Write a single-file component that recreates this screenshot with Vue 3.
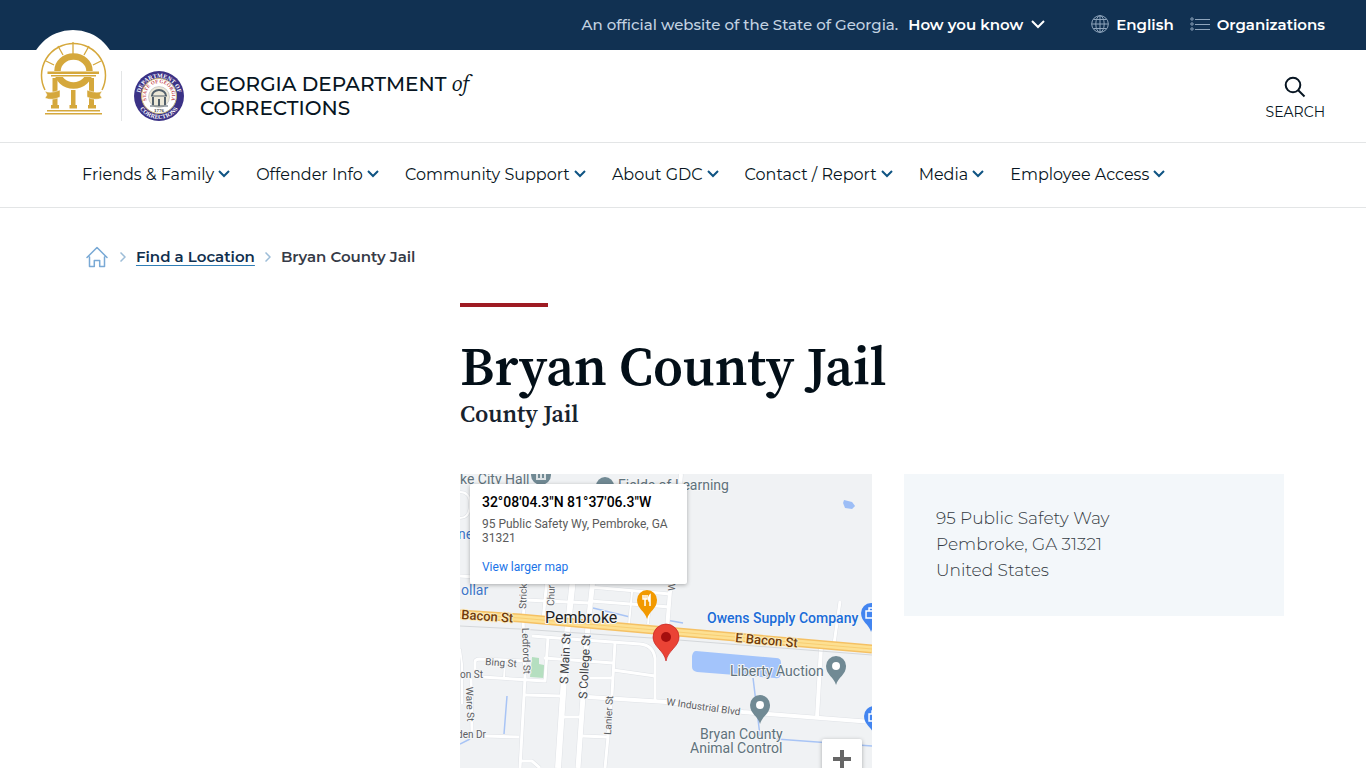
<template>
  <div class="page">
    <div class="top-bar">
      <div class="official">
        <span>An official website of the State of Georgia.</span>
        <button type="button" class="know-button">
          How you know
          <svg width="14" height="9" viewBox="0 0 14 9" aria-hidden="true">
            <path d="M1 1l6 6 6-6" fill="none" stroke="currentColor" stroke-width="2" />
          </svg>
        </button>
      </div>
      <div class="top-links">
        <a href="#language">
          <svg width="18" height="18" viewBox="0 0 18 18" fill="none" stroke="#8fa5bc" aria-hidden="true">
            <circle cx="9" cy="9" r="8.3" />
            <ellipse cx="9" cy="9" rx="4.2" ry="8.3" />
            <path d="M9 .7v16.6M.7 9h16.6M2.4 4.5h13.2M2.4 13.5h13.2" />
          </svg>
          English
        </a>
        <a href="#organizations">
          <svg width="20" height="14" viewBox="0 0 20 14" fill="none" stroke="#8fa5bc" aria-hidden="true">
            <circle cx="2" cy="2" r="1.2" />
            <circle cx="2" cy="7" r="1.2" />
            <circle cx="2" cy="12" r="1.2" />
            <path d="M5 2.5h15M5 7.5h15M5 12.5h15" />
          </svg>
          Organizations
        </a>
      </div>
    </div>

    <header class="site-header">
      <a href="#georgia" class="state-logo" aria-label="Georgia.gov">
        <svg width="88" height="88" viewBox="0 0 88 88">
          <circle cx="44" cy="44" r="44" fill="#fff" />
          <g fill="none" stroke="#d5a83c">
            <path d="M16 60A32 32 0 1 1 73 60" stroke-width="1.5" />
            <path d="M17 31l8 4M29 16l5 9M44 12v12M60 16l-5 9M72 31l-8 4" stroke-width="1.3" />
            <ellipse cx="44.5" cy="41" rx="16" ry="14.5" stroke-width="6.5" />
          </g>
          <path d="M18 41h53v6H18z" fill="#fff" />
          <g fill="#d5a83c">
            <path d="M18.500 41.500h51.500v2.500h-51.500zM22 45h45v1.500H22z" />
            <path d="M23.500 48h5v27h-5zM60 48h5v27h-5zM42 60h4.500v15H42z" />
            <path d="M22 75h8v3.500h-8zM59 75h8v3.500h-8zM40.500 75h7.500v3.500h-7.500z" />
            <path d="M18 80h53v1.500H18zM16 83h57v1.500H16z" />
            <path d="M16 61q5 3 15-1v7q-8 4-15 1l2-3zM73 61q-5 3-15-1v7q8 4 15 1l-2-3z" stroke="#fff" stroke-width=".5" />
          </g>
        </svg>
      </a>
      <a href="#home" class="brand">
        <svg class="seal" width="50" height="50" viewBox="0 0 50 50" aria-hidden="true">
          <defs>
            <path id="seal-top" d="M6.500 30A19 19 0 1 1 43.500 30" />
            <path id="seal-bottom" d="M2 25A23 23 0 0 0 48 25" />
            <path id="seal-inner" d="M13 30A13 13 0 1 1 37 30" />
          </defs>
          <circle cx="25" cy="25" r="25" fill="#3b3286" />
          <circle cx="25" cy="25" r="17.5" fill="#fff" stroke="#c8b679" />
          <circle cx="25" cy="26" r="10.5" fill="#ece8d8" stroke="#a6a9ad" stroke-width=".5" />
          <g font-family="Liberation Serif, serif" font-weight="bold">
            <text font-size="6" fill="#fff"><textPath href="#seal-top" startOffset="50%" text-anchor="middle">DEPARTMENT OF</textPath></text>
            <text font-size="6" fill="#fff"><textPath href="#seal-bottom" startOffset="50%" text-anchor="middle">CORRECTIONS</textPath></text>
            <text font-size="5" fill="#c44a50"><textPath href="#seal-inner" startOffset="50%" text-anchor="middle">STATE OF GEORGIA</textPath></text>
            <text x="25" y="41" font-size="5" fill="#444" text-anchor="middle">1776</text>
          </g>
          <g fill="none" stroke="#52606c">
            <path d="M18 25a7 6 0 0 1 14 0" stroke-width="2" />
            <path d="M17 25h16M16 35h18" />
            <path d="M19 26v8M31 26v8M25 28v7" stroke-width="2" />
          </g>
        </svg>
        <span class="brand-name">GEORGIA DEPARTMENT <em>of</em><br />CORRECTIONS</span>
      </a>
      <button type="button" class="search-button">
        <svg width="22" height="22" viewBox="0 0 22 22" aria-hidden="true">
          <circle cx="9" cy="9" r="7.3" fill="none" stroke="currentColor" stroke-width="2" />
          <path d="M14 14l6.500 6.500" stroke="currentColor" stroke-width="2" />
        </svg>
        SEARCH
      </button>
    </header>

    <nav class="main-nav" aria-label="Main">
      <button v-for="item in navItems" :key="item" type="button">
        {{ item }}
        <svg width="12" height="8" viewBox="0 0 12 8" aria-hidden="true">
          <path d="M1 1l5 5 5-5" fill="none" stroke="#0f5483" stroke-width="2" />
        </svg>
      </button>
    </nav>

    <nav class="breadcrumb" aria-label="Breadcrumb">
      <a href="#home" aria-label="Home">
        <svg width="22" height="22" viewBox="0 0 22 22" fill="none" stroke="#79a9d5" stroke-width="1.5">
          <path d="M1 11.500L11 1.500l10 10M3.500 11v9.500h4.800v-6h5.400v6h4.800V11" stroke-linejoin="round" stroke-linecap="round" />
        </svg>
      </a>
      <svg class="sep" width="6" height="10" viewBox="0 0 6 10" aria-hidden="true"><path d="M.5.5L5 5 .5 9.500" /></svg>
      <a href="#locations" class="crumb-link">Find a Location</a>
      <svg class="sep" width="6" height="10" viewBox="0 0 6 10" aria-hidden="true"><path d="M.5.5L5 5 .5 9.500" /></svg>
      <span>Bryan County Jail</span>
    </nav>

    <main class="content">
      <h1>Bryan County Jail</h1>
      <p class="subtitle">County Jail</p>

      <div class="columns">
        <div class="map">
          <svg class="map-canvas" viewBox="0 0 412 294" preserveAspectRatio="xMidYMin slice">
            <rect width="412" height="294" fill="#f0f2f4" />
            <path d="M72 183l7 1v6l5 1v13l-14-1z" fill="#b5dfc0" />
            <path d="M236 177l80 7q5 0 5 5v11q-1 5-6 4l-78-6q-5-1-5-5v-11q1-5 4-5z" fill="#a3c4fb" />
            <path d="M384 26l8 2 3 4-3 3-7-1-2-5z" fill="#9dbef6" />
            <g fill="none" stroke="#a8c4f5" stroke-width="1.5">
              <path d="M47 222l-3 38M0 270l10-5M133 134l37 9M206 146l17 3M293 204l7 58M316 265l96 7" />
            </g>

            <g fill="none" stroke-linejoin="round">
              <g stroke="#dfe2e6">
                <path v-for="road in roads" :key="road.d" :d="road.d" :stroke-width="road.w + 1" />
              </g>
              <g stroke="#fff">
                <path v-for="road in roads" :key="road.d" :d="road.d" :stroke-width="road.w" />
              </g>
            </g>
            <path d="M0 152l60 3 146 10 206 16" fill="none" stroke="#d4d7da" />
            <g fill="none">
              <path :d="highway" stroke="#f5c164" stroke-width="9" />
              <path :d="highway" stroke="#fde092" stroke-width="6" />
              <path :d="highway" stroke="#f8ce73" />
            </g>

            <g fill="#718a94">
              <circle cx="81" cy="1" r="10" />
              <circle cx="145" cy="12" r="9" />
              <path d="M76 5h10M77 0v4M81 0v4M85 0v4" stroke="#fff" stroke-width="1.5" />
            </g>

            <text
              v-for="label in labels"
              :key="label.text"
              :class="['map-label', label.kind]"
              :transform="`translate(${label.x} ${label.y}) rotate(${label.angle || 0})`"
              :font-size="label.size"
            >{{ label.text }}</text>

            <g v-for="pin in pins" :key="pin.x" :transform="`translate(${pin.x} ${pin.y})`">
              <path d="M0 19C-2 11-10 9-10 0a10 10 0 0 1 20 0C10 9 2 11 0 19z" :fill="pin.color" />
              <circle v-if="pin.icon === 'dot'" r="4" fill="#fff" />
              <path v-else-if="pin.icon === 'food'" d="M-4-5v4h4v-4M-2-5V6M3 6v-11q-2 2-1 6h1" fill="none" stroke="#fff" stroke-width="1.5" />
              <path v-else d="M-5-2H5v7H-5zM-2-2v-3h4v3" fill="none" stroke="#fff" stroke-width="1.5" />
            </g>

            <path d="M206 187c-2-11-13-14-13-24a13 13 0 0 1 26 0c0 10-11 13-13 24z" fill="#ea4335" stroke="#c5221f" stroke-width=".7" />
            <circle cx="206" cy="163" r="5" fill="#a50e0e" />
          </svg>

          <div class="place-card">
            <strong>32°08'04.3"N 81°37'06.3"W</strong>
            <p>95 Public Safety Wy, Pembroke, GA 31321</p>
            <a href="#map">View larger map</a>
          </div>
          <button type="button" class="zoom-in" aria-label="Zoom in">
            <svg width="18" height="18" viewBox="0 0 18 18"><path d="M9 0v18M0 9h18" stroke="#666" stroke-width="4" /></svg>
          </button>
        </div>

        <address class="address-card">
          95 Public Safety Way<br />
          Pembroke, GA 31321<br />
          United States
        </address>
      </div>
    </main>
  </div>
</template>

<script setup>
const navItems = [
  'Friends & Family',
  'Offender Info',
  'Community Support',
  'About GDC',
  'Contact / Report',
  'Media',
  'Employee Access'
]

const highway = 'M0 140L60 144L206 157L412 175'

const roads = [
  { d: 'M113 105L107 160L98 294', w: 6 },
  { d: 'M133 105L128 151L118 294', w: 5 },
  { d: 'M155 168L152 220L145 294', w: 3 },
  { d: 'M67 105L63 144L65 204L60 294', w: 3 },
  { d: 'M87 105L83 146', w: 3 },
  { d: 'M72 162L110 165L180 170Q193 171 195 184V226', w: 3 },
  { d: 'M15 197V188Q15 185 20 185L65 187M84 184L153 189', w: 3 },
  { d: 'M22 203L85 207L88 163', w: 3 },
  { d: 'M130 204H153M153 196L195 202', w: 3 },
  { d: 'M45 188L44 204', w: 2 },
  { d: 'M65 221L101 222M104 243H120', w: 3 },
  { d: 'M128 223L206 228L283 238L412 248', w: 4 },
  { d: 'M11 205L12 258', w: 3 },
  { d: 'M25 262L59 263M122 262L148 263', w: 3 },
  { d: 'M60 287H72L80 294', w: 3 },
  { d: 'M361 173L357 243', w: 4 },
  { d: 'M380 127L374 170', w: 3 },
  { d: 'M221 0L210 117L207 155', w: 4 },
  { d: 'M0 102L30 104M65 126L130 129M130 113L210 120M130 127L210 133', w: 3 },
  { d: 'M172 118L169 150M191 118L188 150', w: 2 },
  { d: 'M0 18Q10 18 10 30Q10 44 0 44', w: 2 },
  { d: 'M0 175L2 190V230', w: 2 }
]

const labels = [
  { text: 'ke City Hall', x: 0, y: 10, size: 14, kind: 'place' },
  { text: 'Fields of Learning', x: 158, y: 16, size: 14, kind: 'place' },
  { text: 'ne', x: -2, y: 65, size: 14, kind: 'shop' },
  { text: 'ollar', x: 1, y: 121, size: 14, kind: 'shop' },
  { text: 'Bacon St', x: 1, y: 145, size: 13, angle: 4, kind: 'highway' },
  { text: 'Pembroke', x: 85, y: 149, size: 16, kind: 'town' },
  { text: 'Owens Supply Company', x: 247, y: 149, size: 14, kind: 'shop strong' },
  { text: 'E Bacon St', x: 275, y: 168, size: 13, angle: 5, kind: 'highway' },
  { text: 'Liberty Auction', x: 270, y: 202, size: 14, kind: 'place' },
  { text: 'W Industrial Blvd', x: 206, y: 231, size: 10, angle: 8, kind: 'street' },
  { text: 'Bryan County', x: 240, y: 265, size: 14, kind: 'place' },
  { text: 'Animal Control', x: 230, y: 279, size: 14, kind: 'place' },
  { text: 'Bing St', x: 25, y: 191, size: 10, angle: 4, kind: 'street' },
  { text: 'on St', x: 0, y: 204, size: 10, kind: 'street' },
  { text: 'den Dr', x: -3, y: 264, size: 10, kind: 'street' },
  { text: 'Ware St', x: 6, y: 213, size: 10, angle: 88, kind: 'street' },
  { text: 'Ledford St', x: 62, y: 154, size: 10, angle: 88, kind: 'street' },
  { text: 'Strick', x: 66, y: 135, size: 10, angle: -88, kind: 'street' },
  { text: 'Chur', x: 94, y: 132, size: 10, angle: -88, kind: 'street' },
  { text: 'W', x: 215, y: 117, size: 10, angle: -88, kind: 'street' },
  { text: 'S Main St', x: 108, y: 210, size: 12, angle: -87, kind: 'main' },
  { text: 'S College St', x: 127, y: 225, size: 12, angle: -87, kind: 'main' },
  { text: 'Lanier St', x: 151, y: 261, size: 10, angle: -87, kind: 'street' }
]

const pins = [
  { x: 187, y: 126, color: '#f29900', icon: 'food' },
  { x: 376, y: 192, color: '#718a94', icon: 'dot' },
  { x: 300, y: 231, color: '#718a94', icon: 'dot' },
  { x: 411, y: 139, color: '#4385f0', icon: 'shop' },
  { x: 414, y: 242, color: '#4385f0', icon: 'shop' }
]
</script>

<style>
body {
  margin: 0;
  background: #fff;
}
</style>

<style scoped>
.page {
  color: #071522;
  font-family: Montserrat, Inter, "Open Sans", sans-serif;
  font-size: 16px;
}

.page * {
  box-sizing: border-box;
}

a {
  color: inherit;
  text-decoration: none;
}

button {
  padding: 0;
  border: 0;
  background: none;
  color: inherit;
  font: inherit;
  cursor: pointer;
}

svg {
  display: block;
  flex: none;
}

.top-bar {
  display: flex;
  align-items: center;
  justify-content: flex-end;
  gap: 46px;
  height: 50px;
  padding: 0 3% 2px;
  background: #113152;
  color: #fff;
  font-size: 15px;
  font-weight: 600;
}

.official,
.know-button,
.top-links,
.top-links a {
  display: flex;
  align-items: center;
}

.official {
  gap: 10px;
  color: #c3d3e2;
  font-weight: 500;
}

.know-button {
  gap: 8px;
  color: #fff;
  font-weight: 600;
}

.top-links {
  gap: 16px;
}

.top-links a {
  gap: 7px;
}

.site-header {
  display: flex;
  align-items: center;
  height: 93px;
  padding: 0 3%;
  border-bottom: 1px solid #e3e5e6;
}

.state-logo {
  align-self: flex-start;
  margin: -20px 4px 0 -12px;
}

.brand {
  display: flex;
  align-items: center;
  gap: 16px;
  height: 50px;
  padding-left: 12px;
  border-left: 1px solid #e3e5e6;
}

.brand-name {
  font-size: 20px;
  font-weight: 500;
  line-height: 24px;
}

.brand-name em {
  font-family: "Source Serif 4", "Source Serif Pro", "Liberation Serif", serif;
  font-size: 22px;
  font-weight: 400;
  line-height: 20px;
}

.search-button {
  display: flex;
  flex-direction: column;
  align-items: center;
  gap: 6px;
  margin-left: auto;
  padding-top: 3px;
  font-size: 14px;
  line-height: 16px;
}

.main-nav {
  display: flex;
  align-items: center;
  gap: 26px;
  height: 65px;
  padding: 0 6% 2px;
  border-bottom: 1px solid #e3e5e6;
}

.main-nav button {
  display: flex;
  align-items: center;
  gap: 4px;
  white-space: nowrap;
}

.breadcrumb {
  display: flex;
  align-items: center;
  gap: 10px;
  margin: 36px 6% 0;
  padding-left: 4px;
  color: #363b47;
  font-size: 15px;
  font-weight: 600;
  line-height: 26px;
}

.breadcrumb a:first-child {
  margin-right: 2px;
}

.sep {
  fill: none;
  stroke: #9dbdd8;
  stroke-width: 1.5;
}

.crumb-link {
  color: #102f4e;
  text-decoration: underline;
  text-decoration-color: #2f7db5;
  text-decoration-thickness: 1px;
  text-underline-offset: 3px;
}

.content {
  margin: 33px 6% 0;
  padding-left: 378px;
}

.content::before {
  content: "";
  display: block;
  width: 88px;
  height: 4px;
  background: #9e1b23;
}

h1,
.subtitle {
  margin: 0;
  font-family: "Source Serif 4", "Source Serif Pro", "Liberation Serif", serif;
  font-weight: 600;
}

h1 {
  margin-top: 27px;
  color: #030f18;
  font-size: 54px;
  line-height: 64px;
}

.subtitle {
  color: #17232e;
  font-size: 24px;
  line-height: 32px;
}

.columns {
  display: grid;
  grid-template-columns: 50% 1fr;
  gap: 32px;
  align-items: start;
  margin-top: 44px;
}

.map {
  position: relative;
  height: 294px;
  overflow: hidden;
  font-family: Roboto, sans-serif;
}

.map-canvas {
  width: 100%;
  height: 100%;
}

.map-label {
  paint-order: stroke;
  stroke: #f5f6f7;
  stroke-width: 2px;
  stroke-linejoin: round;
}

.place {
  fill: #60727c;
}

.shop {
  fill: #3f76c9;
}

.strong {
  fill: #1a6cd8;
  font-weight: 500;
}

.highway {
  fill: #713c0b;
  stroke: #fdebbd;
  font-weight: 500;
}

.town {
  fill: #202124;
}

.street {
  fill: #5d6064;
}

.main {
  fill: #404246;
}

.place-card {
  position: absolute;
  top: 10px;
  left: 10px;
  width: 217px;
  height: 100px;
  padding: 9px 12px;
  border-radius: 2px;
  background: #fff;
  box-shadow: 0 1px 4px rgba(0, 0, 0, 0.3);
  color: #5b5b5b;
  font-size: 12px;
  line-height: 14px;
}

.place-card strong {
  color: #000;
  font-size: 14px;
  font-weight: 500;
  line-height: 18px;
}

.place-card p {
  margin: 6px 0 15px;
}

.place-card a {
  color: #1a73e8;
}

.zoom-in {
  position: absolute;
  right: 10px;
  bottom: -11px;
  display: grid;
  place-items: center;
  width: 40px;
  height: 40px;
  border-radius: 2px;
  background: #fff;
  box-shadow: 0 1px 4px rgba(0, 0, 0, 0.3);
}

.address-card {
  padding: 31px 32px 33px;
  background: #f3f7fa;
  color: #343b43;
  font-size: 17px;
  font-style: normal;
  font-weight: 300;
  line-height: 26px;
}
</style>
